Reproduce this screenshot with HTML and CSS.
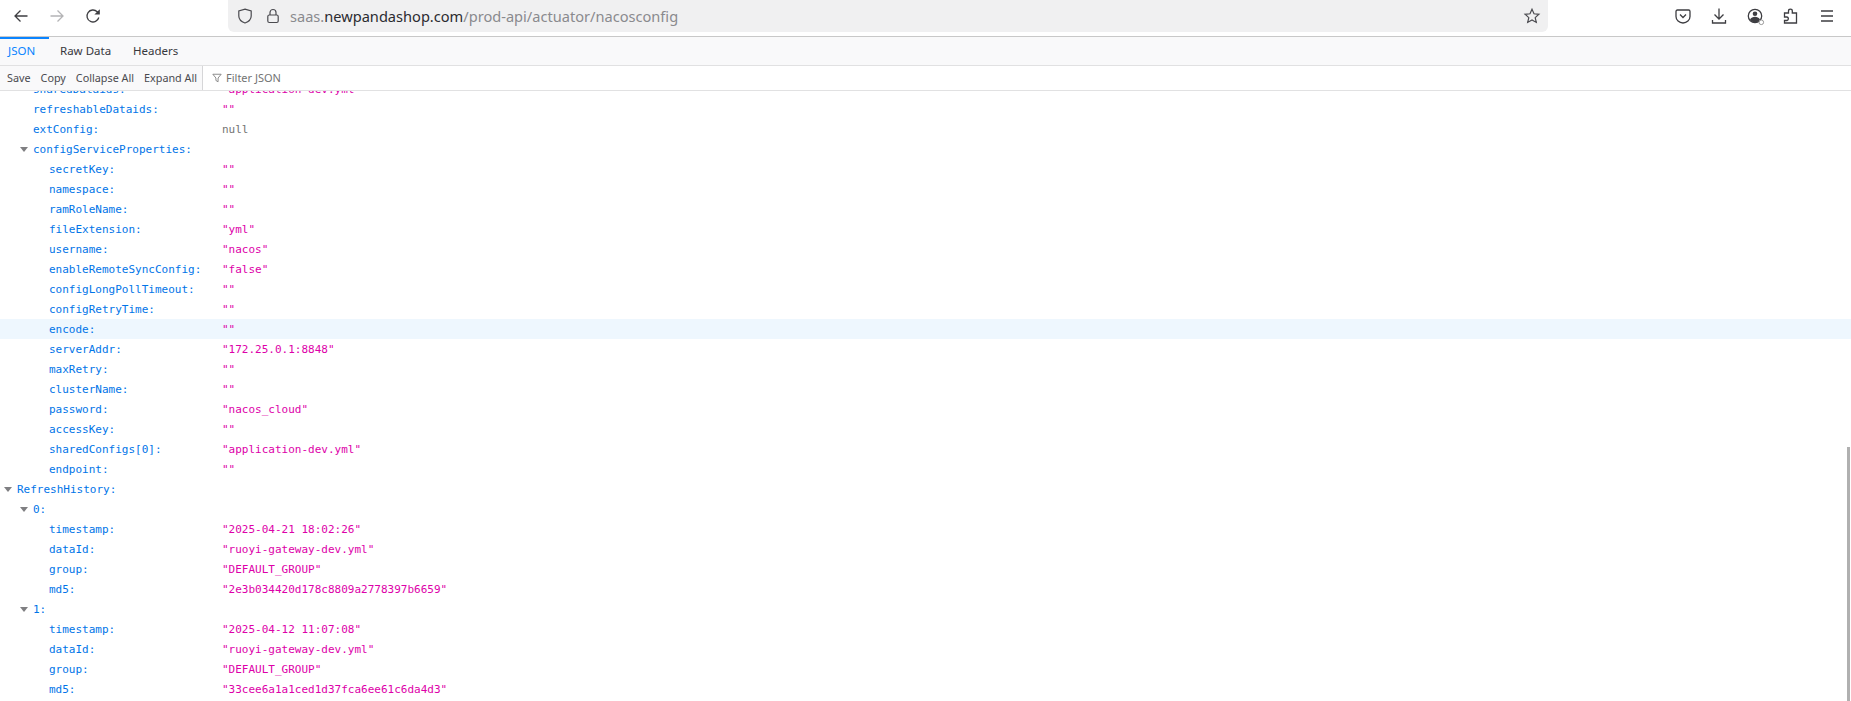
FILE: index.html
```html
<!DOCTYPE html>
<html lang="en">
<head>
<meta charset="utf-8">
<title>nacosconfig</title>
<link rel="stylesheet" href="styles.css">
</head>
<body>
<div class="browser">
  <header class="navbar">
    <div class="nav-buttons">
      <svg class="icon" viewBox="0 0 16 16"><path d="M14.500 8H2M7.500 2.500 2 8l5.500 5.500"/></svg>
      <svg class="icon dim" viewBox="0 0 16 16"><path d="M1.500 8H14M8.500 2.500 14 8l-5.500 5.500"/></svg>
      <svg class="icon" viewBox="0 0 16 16"><path d="M13.800 9.500A6 6 0 1 1 12.200 3.700L14 5.500"/><path class="solid" d="M14.800 1.200v5.400H9.400z"/></svg>
    </div>
    <div class="urlbar">
      <svg class="icon" viewBox="0 0 16 16"><path d="M8 1.200 14.200 3v5c0 3.500-2.800 5.800-6.200 7C4.600 13.800 1.800 11.500 1.800 8V3z"/></svg>
      <svg class="icon lock" viewBox="0 0 16 16"><rect x="2.800" y="7" width="10.400" height="7.500" rx="1.500"/><path d="M5 7V4.500a3 3 0 0 1 6 0V7"/></svg>
      <div class="url">saas.<span class="domain">newpandashop.com</span>/prod-api/actuator/nacosconfig</div>
      <svg class="icon star" viewBox="0 0 16 16"><path d="M8 1.300 10 5.800l4.900.5-3.700 3.300 1.100 4.800L8 12l-4.300 2.400 1.100-4.800L1.100 6.300 6 5.800z"/></svg>
    </div>
    <div class="nav-tools">
      <svg class="icon" viewBox="0 0 16 16"><path d="M2.400 2h11.200c.9 0 1.400.5 1.400 1.400V8.500a7 6.500 0 0 1-14 0V3.400c0-.9.500-1.400 1.400-1.400z"/><path d="M5 6.500l3 3 3-3"/></svg>
      <svg class="icon" viewBox="0 0 16 16"><path d="M8 0.500v10.500M3.500 6.500 8 11l4.500-4.500M1.500 12v3h13v-3"/></svg>
      <svg class="icon" viewBox="0 0 16 16"><circle cx="8" cy="8" r="6.700"/><circle class="solid" cx="8" cy="5.800" r="2.300"/><path class="solid" d="M3 11.500c1-2 3-2.800 5-2.800s4 .8 5 2.800c-1 2-3 3-5 3s-4-1-5-3z"/><circle class="badge" cx="14.300" cy="14.300" r="2.300"/></svg>
      <svg class="icon" viewBox="0 0 16 16"><path d="M1.500 5h4V3c0-2.400 3.800-2.400 3.800 0v2h4.200v10H1.500v-2.500h2.500a1.800 1.800 0 0 0 0-3.500H1.500z"/></svg>
      <svg class="icon" viewBox="0 0 16 16"><path d="M2 3h12M2 8h12M2 13h12"/></svg>
    </div>
  </header>
  <nav class="tabs">
    <div class="tab active">JSON</div>
    <div class="tab">Raw Data</div>
    <div class="tab">Headers</div>
  </nav>
  <div class="toolbar">
    <div class="tools">
      <button class="tool">Save</button>
      <button class="tool">Copy</button>
      <button class="tool">Collapse All</button>
      <button class="tool">Expand All</button>
    </div>
    <svg class="funnel" viewBox="0 0 12 12"><path d="M1 1.500h10L7.300 6v4.500L4.700 9V6z"/></svg>
    <span class="filter">Filter JSON</span>
  </div>
  <main class="viewer">
    <div class="tree">
      <div class="row l1"><span class="key">sharedDataids:</span><span class="str">"application-dev.yml"</span></div>
      <div class="row l1"><span class="key">refreshableDataids:</span><span class="str">""</span></div>
      <div class="row l1"><span class="key">extConfig:</span><span class="nul">null</span></div>
      <div class="row l1 open"><span class="key"><i class="twisty"></i>configServiceProperties:</span></div>
      <div class="row l2"><span class="key">secretKey:</span><span class="str">""</span></div>
      <div class="row l2"><span class="key">namespace:</span><span class="str">""</span></div>
      <div class="row l2"><span class="key">ramRoleName:</span><span class="str">""</span></div>
      <div class="row l2"><span class="key">fileExtension:</span><span class="str">"yml"</span></div>
      <div class="row l2"><span class="key">username:</span><span class="str">"nacos"</span></div>
      <div class="row l2"><span class="key">enableRemoteSyncConfig:</span><span class="str">"false"</span></div>
      <div class="row l2"><span class="key">configLongPollTimeout:</span><span class="str">""</span></div>
      <div class="row l2"><span class="key">configRetryTime:</span><span class="str">""</span></div>
      <div class="row l2 hover"><span class="key">encode:</span><span class="str">""</span></div>
      <div class="row l2"><span class="key">serverAddr:</span><span class="str">"172.25.0.1:8848"</span></div>
      <div class="row l2"><span class="key">maxRetry:</span><span class="str">""</span></div>
      <div class="row l2"><span class="key">clusterName:</span><span class="str">""</span></div>
      <div class="row l2"><span class="key">password:</span><span class="str">"nacos_cloud"</span></div>
      <div class="row l2"><span class="key">accessKey:</span><span class="str">""</span></div>
      <div class="row l2"><span class="key">sharedConfigs[0]:</span><span class="str">"application-dev.yml"</span></div>
      <div class="row l2"><span class="key">endpoint:</span><span class="str">""</span></div>
      <div class="row l0 open"><span class="key"><i class="twisty"></i>RefreshHistory:</span></div>
      <div class="row l1 open"><span class="key"><i class="twisty"></i>0:</span></div>
      <div class="row l2"><span class="key">timestamp:</span><span class="str">"2025-04-21 18:02:26"</span></div>
      <div class="row l2"><span class="key">dataId:</span><span class="str">"ruoyi-gateway-dev.yml"</span></div>
      <div class="row l2"><span class="key">group:</span><span class="str">"DEFAULT_GROUP"</span></div>
      <div class="row l2"><span class="key">md5:</span><span class="str">"2e3b034420d178c8809a2778397b6659"</span></div>
      <div class="row l1 open"><span class="key"><i class="twisty"></i>1:</span></div>
      <div class="row l2"><span class="key">timestamp:</span><span class="str">"2025-04-12 11:07:08"</span></div>
      <div class="row l2"><span class="key">dataId:</span><span class="str">"ruoyi-gateway-dev.yml"</span></div>
      <div class="row l2"><span class="key">group:</span><span class="str">"DEFAULT_GROUP"</span></div>
      <div class="row l2"><span class="key">md5:</span><span class="str">"33cee6a1a1ced1d37fca6ee61c6da4d3"</span></div>
    </div>
    <div class="scrollthumb"></div>
  </main>
</div>
</body>
</html>
```
FILE: styles.css
```css
* { box-sizing: border-box; }
html, body { margin: 0; height: 100%; overflow: hidden; background: #fff; }
.browser { height: 701px; display: flex; flex-direction: column; font-family: "Noto Sans", sans-serif; }
.navbar { height: 37px; flex: none; display: flex; align-items: flex-start; border-bottom: 1px solid #c8c8c8; background: #fff; }
.icon { width: 16px; height: 16px; fill: none; stroke: #3e3e42; stroke-width: 1.300; flex: none; overflow: visible; }
.icon .solid { fill: #3e3e42; stroke: none; }
.icon .badge { fill: #fff; stroke: #9a9a9a; stroke-width: 1; }
.icon.dim { stroke: #b4b4b6; }
.nav-buttons { width: 228px; height: 32px; flex: none; display: flex; align-items: center; padding-left: 13px; gap: 20px; }
.urlbar { width: 1320px; height: 32px; flex: none; display: flex; align-items: center; padding: 0 8px 0 9px; background: #f0f0f1; border-radius: 0 0 6px 6px; }
.urlbar .icon { stroke: #4a4a4f; stroke-width: 1.200; }
.urlbar .lock { margin-left: 12px; }
.urlbar .star { margin-left: auto; }
.url { margin-left: 9px; font: 14.600px "Noto Sans", sans-serif; color: #8a8a8e; white-space: nowrap; }
.domain { color: #2b2b30; }
.nav-tools { flex: 1; height: 32px; display: flex; align-items: center; justify-content: flex-end; gap: 20px; padding-right: 16px; }
.tabs { height: 29px; flex: none; display: flex; background: #f9f9fa; border-bottom: 1px solid #e1e1e2; }
.tab { height: 28px; padding: 0 11px; font-size: 11.500px; line-height: 28px; color: #38383d; }
.tab.active { width: 49px; padding: 0 0 0 8px; color: #0a84ff; box-shadow: inset 0 2px 0 #0a84ff; }
.toolbar { height: 25px; flex: none; display: flex; align-items: center; border-bottom: 1px solid #e1e1e2; background: #fff; position: relative; z-index: 1; }
.tools { width: 203px; height: 24px; flex: none; display: flex; align-items: center; padding: 0 0 2px 2px; background: #f9f9fa; border-right: 1px solid #d6d6d8; }
.tool { border: 0; background: none; padding: 0 5px; font: 10.800px "Noto Sans", sans-serif; color: #4a4a4f; white-space: nowrap; }
.funnel { width: 10px; height: 12px; margin: 0 4px 0 9px; fill: none; stroke: #777; stroke-width: 1; flex: none; }
.filter { font-size: 11px; color: #737373; padding-bottom: 2px; }
.viewer { flex: 1; min-height: 0; overflow: hidden; position: relative; }
.tree { margin-top: -12px; font: 11px/22px "DejaVu Sans Mono", monospace; }
.row { height: 20px; display: flex; white-space: pre; }
.row.hover { background: #eef7fe; }
.key { width: 222px; flex: none; color: #0074e8; position: relative; }
.l0 .key { padding-left: 17px; }
.l1 .key { padding-left: 33px; }
.l2 .key { padding-left: 49px; }
.str { color: #dd00a9; }
.nul { color: #737373; }
.twisty { position: absolute; top: 8px; width: 0; height: 0; border: 4px solid transparent; border-top: 5px solid #7f7f82; border-bottom: 0; }
.l0 .twisty { left: 4px; }
.l1 .twisty { left: 20px; }
.scrollthumb { position: absolute; right: 1px; top: 356px; bottom: 0; width: 3px; background: #b0b0b0; }
```
